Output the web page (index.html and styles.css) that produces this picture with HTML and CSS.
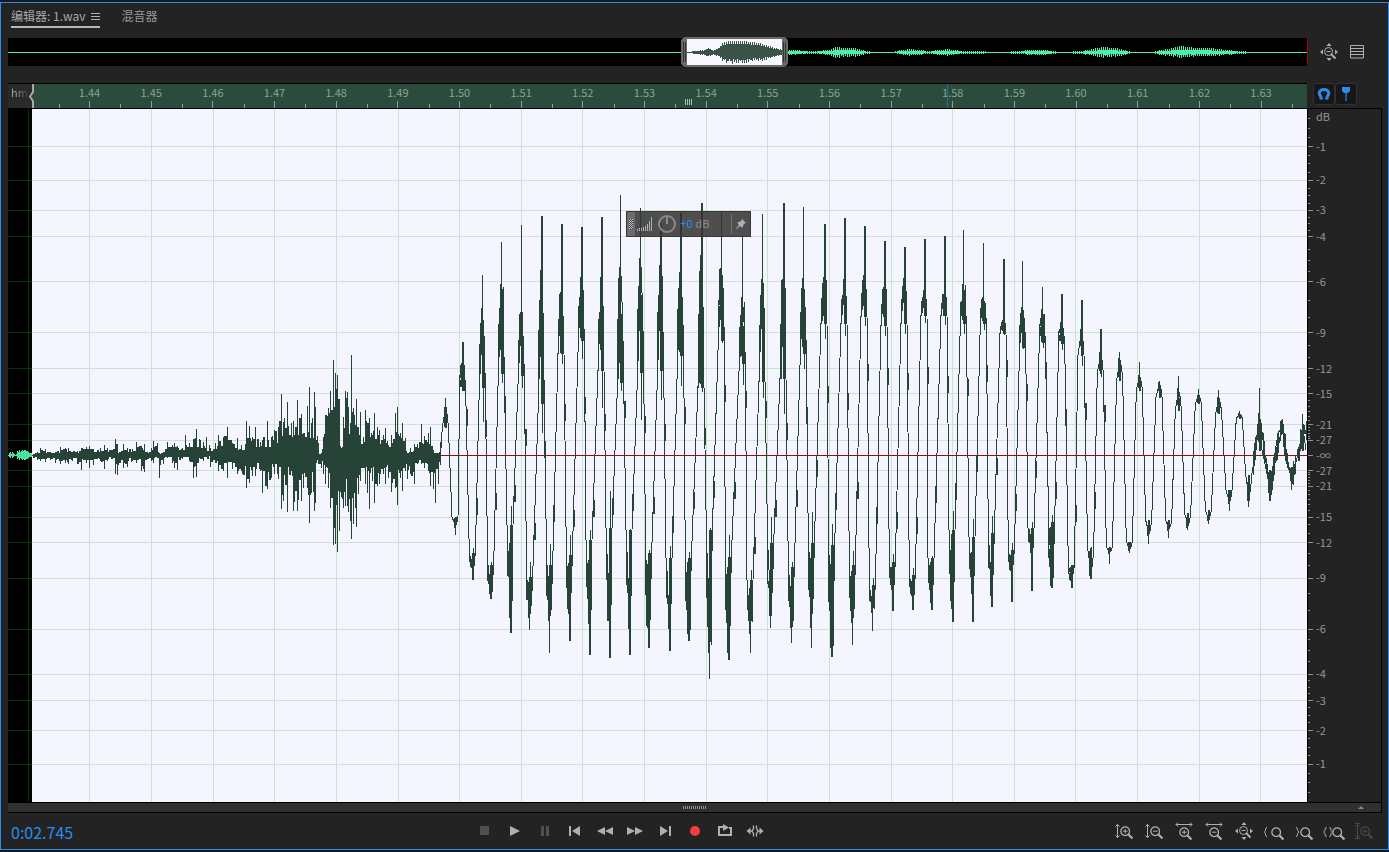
FILE: index.html
```html
<!DOCTYPE html>
<html lang="zh-CN">
<head>
<meta charset="utf-8">
<title>编辑器: 1.wav</title>
<link rel="stylesheet" href="styles.css">
</head>
<body>
<svg class="defs" aria-hidden="true">
  <symbol id="lens" viewBox="0 0 12 12"><path d="M7.800 7.800 11.500 11.500" stroke-width="2"/><circle cx="4.800" cy="4.800" r="4" stroke-width="1.200"/></symbol>
  <symbol id="updown" viewBox="0 0 5 16"><path d="M2.500 1v14M.5 3.500l2-2 2 2M.5 12.500l2 2 2-2"/></symbol>
  <symbol id="leftright" viewBox="0 0 18 5"><path d="M1 2.500h16M3 .5l-2 2 2 2M15 .5l2 2-2 2"/></symbol>
  <symbol id="allout" viewBox="0 0 18 18">
    <path d="M11 11l4.500 4.500" stroke-width="2"/><circle cx="8.500" cy="8.500" r="4"/><path d="M6.500 8.500h4"/>
    <path class="solid" d="M9 0l2.500 3h-5zM9 18l2.500-3h-5zM0 9l3-2.500v5zM18 9l-3-2.500v5z"/>
  </symbol>
</svg>
<main class="panel">
  <nav class="tabs">
    <div class="tab active"><a class="tab-link" href="#editor">编辑器: 1.wav</a>
      <button class="icon-button menu" aria-label="菜单"><svg width="9" height="9" viewBox="0 0 9 9"><path d="M0 1.500h9M0 4.500h9M0 7.500h9"/></svg></button></div>
    <div class="tab"><a class="tab-link" href="#mixer">混音器</a></div>
  </nav>

  <div class="editor">
    <div class="overview">
      <svg class="fill" id="overview" viewBox="0 0 1299 28" preserveAspectRatio="none" aria-hidden="true"></svg>
      <div class="range"><svg class="fill" id="range" viewBox="0 0 95 26" preserveAspectRatio="none" aria-hidden="true"></svg></div>
      <span class="overview-end"></span>
    </div>
    <div class="overview-tools">
      <button class="icon-button" aria-label="全部缩小"><svg width="18" height="18"><use href="#allout"/></svg></button>
      <button class="icon-button" aria-label="列表"><svg width="14" height="14" viewBox="0 0 14 14"><path d="M.5.500h13v12.500H.5zM0 3.500h14M0 6.500h14M0 9.500h14"/></svg></button>
    </div>

    <div class="ruler">
      <div class="ruler-start">hms</div>
      <svg class="brace" width="6" height="24" viewBox="0 0 6 24" aria-hidden="true"><path d="M5 0v8L2 12.500 5 17v7" stroke-width="2"/></svg>
      <div class="ruler-lead"></div>
      <div class="ruler-cells" id="times"></div>
      <div class="ruler-tail"></div>
      <div class="ruler-grip"></div>
      <div class="playmark"></div>
    </div>
    <div class="ruler-tools">
      <button class="toggle" aria-label="对齐"><svg width="14" height="14" viewBox="0 0 14 14"><path d="M4.500 10.500C0 6 3 2.500 7 2.500S14 6 9.500 10.500" stroke-width="3"/><path d="M2.500 11.500H6M8 11.500h3.500" stroke-width="2"/></svg></button>
      <button class="toggle" aria-label="标记"><svg width="10" height="14" viewBox="0 0 10 14"><path class="solid" d="M1 0h8v4L7 6H3L1 4z"/><path d="M5 5v9" stroke-width="2" opacity=".6"/></svg></button>
    </div>

    <section class="plot">
      <svg class="fill" id="wave" viewBox="0 0 1299 693" preserveAspectRatio="none" role="img" aria-label="1.wav"></svg>
      <div class="hud">
        <span class="hud-grip"></span>
        <svg width="16" height="15" viewBox="0 0 16 15" aria-hidden="true"><path d="M.5 15v-2M2.500 15v-3M4.500 15v-3M6.500 15v-4M8.500 15v-5M10.500 15V8M12.500 15V5M14.500 15V1"/></svg>
        <button class="icon-button knob" aria-label="增益旋钮"><svg width="20" height="20" viewBox="0 0 20 20"><circle cx="10" cy="10" r="8" stroke-width="2"/><path d="M10 3v7" stroke-width="2"/></svg></button>
        <input class="gain" id="gain" value="+0"><label class="unit" for="gain">dB</label>
        <button class="icon-button pin" aria-label="固定"><svg width="10" height="10" viewBox="0 0 10 10"><path class="solid" d="M6 0l4 4-1.500.5L7 6.500V8L6 8.500 4 7 .5 10 0 9.500 3 6 1.500 4 2 3h1.500L5.500 1.500z"/></svg></button>
      </div>
    </section>
    <aside class="scale">
      <span class="scale-unit">dB</span>
      <svg class="scale-ticks" id="ticks" viewBox="0 0 5 693" preserveAspectRatio="none" aria-hidden="true"></svg>
      <div class="scale-list" id="levels"></div>
    </aside>
    <div class="scroll"><span class="scroll-grip"></span><span class="scroll-up"></span></div>
  </div>

  <footer class="footer">
    <output class="time">0:02.745</output>
    <div class="buttons">
      <button class="icon-button dim" aria-label="停止"><svg width="18" height="18" viewBox="0 0 18 18"><path class="solid" d="M4 4h9v9H4z"/></svg></button>
      <button class="icon-button" aria-label="播放"><svg width="18" height="18" viewBox="0 0 18 18"><path class="solid" d="M4 4l10 5-10 5z"/></svg></button>
      <button class="icon-button dim" aria-label="暂停"><svg width="18" height="18" viewBox="0 0 18 18"><path class="solid" d="M5 4h3v10H5zM10 4h3v10h-3z"/></svg></button>
      <button class="icon-button" aria-label="移到开头"><svg width="18" height="18" viewBox="0 0 18 18"><path class="solid" d="M3 4h2v10H3zM14 4v10L6 9z"/></svg></button>
      <button class="icon-button" aria-label="快退"><svg width="18" height="18" viewBox="0 0 18 18"><path class="solid" d="M9 5v8L1 9zM17 5v8L9 9z"/></svg></button>
      <button class="icon-button" aria-label="快进"><svg width="18" height="18" viewBox="0 0 18 18"><path class="solid" d="M1 5v8l8-4zM9 5v8l8-4z"/></svg></button>
      <button class="icon-button" aria-label="移到结尾"><svg width="18" height="18" viewBox="0 0 18 18"><path class="solid" d="M4 4v10l8-5zM13 4h2v10h-2z"/></svg></button>
      <button class="icon-button record" aria-label="录制"><svg width="18" height="18" viewBox="0 0 18 18"><circle class="solid" cx="9" cy="9" r="5"/></svg></button>
      <button class="icon-button" aria-label="循环"><svg width="18" height="18" viewBox="0 0 18 18"><path d="M5 5H3v8h12V6h-2M5 5h3" stroke-width="2"/><path class="solid" d="M7 2l6 3.500L7 9z"/></svg></button>
      <button class="icon-button" aria-label="跳过"><svg width="18" height="18" viewBox="0 0 18 18"><path d="M7.500 3.500v3L6 9l1.500 2.500v3M10.500 3.500v3L12 9l-1.500 2.500v3M3 9h3M12 9h3" stroke-width="1.300"/><path class="solid" d="M.5 9l4-3.500v7zM17.500 9l-4-3.500v7z"/></svg></button>
    </div>
    <div class="footer-gap"></div>
    <div class="buttons">
      <button class="icon-button" aria-label="放大振幅"><svg width="18" height="18" viewBox="0 0 18 18"><use href="#updown" x="0" y="1" width="5" height="16"/><use href="#lens" x="5" y="4" width="13" height="13"/><path d="M8 9.200h4.500M10.200 7v4.500"/></svg></button>
      <button class="icon-button" aria-label="缩小振幅"><svg width="18" height="18" viewBox="0 0 18 18"><use href="#updown" x="0" y="1" width="5" height="16"/><use href="#lens" x="5" y="4" width="13" height="13"/><path d="M8 9.200h4.500"/></svg></button>
      <button class="icon-button" aria-label="放大时间"><svg width="18" height="18" viewBox="0 0 18 18"><use href="#leftright" x="0" y="0" width="18" height="5"/><use href="#lens" x="4" y="5" width="13" height="13"/><path d="M7 10.200h4.500M9.200 8v4.500"/></svg></button>
      <button class="icon-button" aria-label="缩小时间"><svg width="18" height="18" viewBox="0 0 18 18"><use href="#leftright" x="0" y="0" width="18" height="5"/><use href="#lens" x="4" y="5" width="13" height="13"/><path d="M7 10.200h4.500"/></svg></button>
      <button class="icon-button" aria-label="全部缩小"><svg width="18" height="18"><use href="#allout"/></svg></button>
      <button class="icon-button" aria-label="缩放至入点"><svg width="20" height="18" viewBox="0 0 20 18"><path d="M3 5L1.500 7v1.500L.5 10l1 1.500V13L3 15"/><use href="#lens" x="7" y="5" width="13" height="13"/></svg></button>
      <button class="icon-button" aria-label="缩放至出点"><svg width="18" height="18" viewBox="0 0 18 18"><path d="M1 5l1.500 2v1.500l1.500 1.500-1.500 1.500V13L1 15"/><use href="#lens" x="5" y="5" width="13" height="13"/></svg></button>
      <button class="icon-button" aria-label="缩放至选区"><svg width="22" height="18" viewBox="0 0 22 18"><path d="M3.500 5L2 7v1.500L.5 10 2 11.500V13l1.500 2M6.500 5L8 7v1.500L9.500 10 8 11.500V13l-1.500 2"/><use href="#lens" x="9" y="5" width="13" height="13"/></svg></button>
      <button class="icon-button faint" aria-label="重置缩放" disabled><svg width="18" height="18" viewBox="0 0 18 18"><path d="M0 1.500h5M0 16.500h5"/><use href="#updown" x="0" y="1" width="5" height="16"/><use href="#lens" x="5" y="4" width="13" height="13"/><path d="M8 9.200h4.500M10.200 7v4.500"/></svg></button>
    </div>
  </footer>
</main>
<script src="script.js"></script>
</body>
</html>
```

FILE: styles.css
```css
* { box-sizing: border-box; }
body {
  margin: 0;
  height: 100vh;
  padding: 2px 0;
  background: #181818;
  color: #969696;
  font: 11px/16px "Noto Sans CJK SC", "Noto Sans", sans-serif;
}
.defs { position: absolute; width: 0; height: 0; }
svg { display: block; fill: none; stroke: currentColor; }
.solid { fill: currentColor; stroke: none; }
.fill { width: 100%; height: 100%; }
button { margin: 0; padding: 0; border: 0; background: none; color: #b0b0b0; }
.icon-button { display: grid; place-items: center; }

.panel {
  height: 100%;
  display: flex;
  flex-direction: column;
  border: 1px solid #2d8ceb;
  background: #232323;
}
.tabs { display: flex; gap: 22px; height: 35px; padding: 5px 10px 10px; font-size: 12px; }
.tab { display: flex; gap: 5px; height: 20px; align-items: flex-start; }
.active { border-bottom: 2px solid #b8b8b8; color: #a8a8a8; }
.tab-link { color: inherit; text-decoration: none; line-height: 15px; }
.menu { height: 16px; }

.editor {
  flex: 1;
  min-height: 0;
  display: grid;
  grid-template-columns: minmax(0, 1fr) 75px;
  grid-template-rows: 45px 26px minmax(0, 1fr) 11px;
  padding: 0 6px 0 7px;
}
.overview { position: relative; height: 28px; background: #000; color: #4df0aa; }
.overview-end { position: absolute; right: -1px; top: 1px; width: 1px; height: 25px; background: #a00; }
.range {
  position: absolute;
  left: 51.800%;
  top: -1px;
  width: 107px;
  height: 30px;
  padding: 0 5px;
  border: 2px solid #696969;
  border-width: 2px 1px;
  border-radius: 5px;
  background:
    linear-gradient(#333, #333) 1px center / 1px 20px no-repeat,
    linear-gradient(#333, #333) 3px center / 1px 20px no-repeat,
    linear-gradient(#333, #333) 101px center / 1px 20px no-repeat,
    linear-gradient(#333, #333) 103px center / 1px 20px no-repeat,
    linear-gradient(90deg, #696969 5px, #f7f7ff 5px, #f7f7ff 100px, #696969 100px);
  color: #3b5347;
}
.overview-tools { display: flex; gap: 12px; height: 28px; padding-left: 13px; align-items: center; }

.ruler {
  position: relative;
  display: flex;
  border: 1px solid #000;
  border-width: 1px 0;
  background: #2b4c3d;
  color: #86a594;
}
.ruler-start {
  width: 24px;
  overflow: hidden;
  padding-left: 3px;
  line-height: 17px;
  color: transparent;
  background: linear-gradient(90deg, #a0a0a0 8px, #2a2a2a 22px) text, #2a2a2a;
}
.brace { position: absolute; left: 20px; top: 0; color: #a8a8a8; }
.ruler-lead { flex: 267 1 0; }
.ruler-cells { flex: 12326 1 0; display: flex; }
.ruler-tail { flex: 152 1 0; background: linear-gradient(#86a594, #86a594) left bottom / 1px 4px no-repeat; }
.time-cell {
  flex: 1 1 0;
  text-align: center;
  line-height: 16px;
  background: linear-gradient(#86a594, #86a594) left bottom / 1px 4px no-repeat, linear-gradient(#86a594, #86a594) center bottom / 1px 7px no-repeat;
}
.ruler-grip {
  position: absolute;
  left: 52.100%;
  bottom: 3px;
  width: 8px;
  height: 6px;
  background: repeating-linear-gradient(90deg, #a9bdb2 0 1px, transparent 1px 2px);
}
.playmark { position: absolute; left: 72.300%; top: 0; bottom: 0; width: 1px; background: #2d6f96; }
.ruler-tools { display: flex; padding: 0 0 3px 6px; border-bottom: 1px solid #000; }
.toggle {
  width: 22px;
  height: 22px;
  display: grid;
  place-items: center;
  border: 1px solid #303030;
  border-radius: 3px;
  background: #171717;
  color: #2d8ceb;
}

.plot { position: relative; background: #000; min-height: 0; }
.hud {
  position: absolute;
  left: 47.600%;
  top: 14.700%;
  width: 125px;
  height: 26px;
  display: flex;
  align-items: center;
  border: 1px solid #383838;
  background: rgba(50, 50, 50, .86);
  color: #b0b0b0;
}
.hud-grip {
  width: 8px;
  height: 24px;
  margin-right: 2px;
  border: solid #6c6c6c;
  border-width: 7px 2px;
  background: repeating-conic-gradient(#c0c0c0 0 25%, #444 0 50%) 0 0 / 2px 2px;
}
.knob { color: #8a8a8a; margin: 0 3px 0 4px; }
.gain { width: 15px; height: 14px; margin-bottom: 2px; padding: 0; border: 0; background: none; color: #2d8ceb; font: inherit; line-height: 14px; outline: 0; }
.unit { color: #8e8e8e; width: 36px; margin-bottom: 2px; }
.pin { flex: 1; height: 20px; border-left: 1px solid #737373; }

.scale { position: relative; border: solid #000; border-width: 0 1px; }
.scale-unit { position: absolute; left: 8px; top: -1px; }
.scale-ticks { position: absolute; left: 0; top: 0; width: 5px; height: 100%; color: #909090; }
.scale-list { height: 100%; display: flex; flex-direction: column; padding-left: 8px; overflow: hidden; }
.level { display: flex; align-items: flex-end; min-height: 0; height: 0; }
.level-text { margin-bottom: -7px; line-height: 16px; }

.scroll {
  grid-column: 1 / 3;
  position: relative;
  border: 1px solid #000;
  border-left: 0;
  background: #303030;
}
.scroll-grip {
  position: absolute;
  left: 49.100%;
  top: 3px;
  width: 24px;
  height: 3px;
  background: repeating-linear-gradient(90deg, transparent 0 1px, #909090 1px 2px);
}
.scroll-up { position: absolute; right: 17px; top: 3px; border: 3px solid transparent; border-top: 0; border-bottom-color: #858585; }

.footer { display: flex; align-items: center; height: 36px; padding: 0 9px 0 10px; }
.time { flex: 458 1 0; color: #2d8ceb; font-size: 16px; line-height: 24px; padding-top: 2px; }
.footer-gap { flex: 339 1 0; }
.buttons { display: flex; }
.buttons .icon-button { width: 30px; height: 30px; }
.buttons .dim { color: #505050; }
.buttons .faint { color: #484848; }
.buttons .record { color: #f43e3a; }
```

FILE: script.js
```js
const X0 = 8, Y0 = 109, ZERO = 455, FULL = 346.5;
let seed = 7;
const random = () => (seed = (seed * 16807) % 2147483647) / 2147483647;
const rect = (x, y1, y2, w = 1) =>
  `M${Math.floor(x)} ${Math.round(Math.min(y1, y2))}h${w}V${Math.round(Math.max(y1, y2)) + 1}h${-w}z`;
const level = db => FULL * 10 ** (db / 20);

/* Noise onset: position, top, bottom, in thirds of a pixel, origin (0, 320) */
const onset = `98,402,410 110,395,418 120,385,420 135,388,422 150,397,418 165,396,425 180,380,430 195,385,425 205,383,428 215,395,420 230,392,428 243,385,448 258,380,425 268,378,440 280,388,432 292,390,415 300,385,420 312,375,445 322,385,420 332,390,415 346,358,460 352,372,462 360,395,425 370,373,440 380,385,437 395,388,420 408,367,425 422,378,450 432,372,452 442,395,415 452,385,420 460,362,425 470,370,410 478,400,470 488,395,430 502,365,410 515,375,425 523,368,440 530,378,446 545,385,415 556,346,408 568,370,420 580,356,470 589,327,468 600,360,415 610,365,420 618,352,408 630,385,437 645,370,425 655,345,450 668,352,450 682,320,470 695,370,445 710,355,460 722,375,450 737,303,500 747,318,485 757,350,465 766,322,465 780,365,450 785,360,516 800,303,505 812,350,470 822,330,460 833,320,475 844,223,563 850,305,540 862,246,573 872,310,450 880,303,570 890,241,570 902,283,540 910,340,500 920,258,500 926,202,605 934,310,515 941,217,570 946,262,545 955,370,430 962,400,440 968,350,460 976,285,488 985,265,500 991,213,560 998,120,672 1004,160,670 1012,165,693 1018,238,630 1025,380,535 1030,290,560 1034,213,555 1040,217,555 1045,262,572 1050,310,600 1054,104,655 1060,265,610 1067,238,617 1075,320,520 1080,277,480 1088,350,440 1094,270,490 1100,310,515 1108,295,563 1116,345,480 1123,278,545 1130,322,495 1137,330,490 1150,345,460 1156,325,490 1165,375,470 1174,345,512 1184,280,500 1191,260,553 1200,340,470 1206,308,510 1215,355,450 1222,400,475 1230,385,460 1242,372,490 1252,372,430 1263,312,430 1272,348,440 1283,340,450 1291,322,495 1298,390,505 1306,400,545 1313,400,490 1320,365,430`
  .split(' ').map(s => s.split(',').map(Number));

/* Voiced cycles: position, tip, outer shoulder, inner shoulder */
const parse = (text, ox, oy) => text.split(' ').map(s => {
  const [x, a, b, c] = s.split(',').map(Number);
  return [ox + x / 3, oy + a / 3, oy + b / 3, oy + c / 3];
});
const cycles = [
  ...parse('46,625,650,710 98,457,520,600 157,256,355,590 214,155,283,550 274,105,365,555 334,78,240,640 393,102,305,490 454,110,262,450 513,80,262,540 572,14,232,575 632,54,205,545 692,100,225,540 752,70,245,495 813,38,196,590 874,66,233,450 937,135,320,520 75,1032,1010,980 127,1166,1130,1090 182,1223,1208,1125 240,1327,1280,1005 299,1318,1280,1160 359,1387,1290,1125 418,1350,1270,1095 477,1391,1300,1050 537,1400,1290,1015 597,1393,1315,1020 656,1370,1310,1090 717,1381,1315,1105 775,1350,1330,1105 838,1464,1385,1020 895,1406,1385,1100 960,1385,1330,1170', 430, 190),
  ...parse('36,72,267,572 99,38,267,565 160,52,265,490 222,102,260,400 282,85,267,400 342,108,255,378 402,153,290,405 462,172,265,400 522,148,300,375 582,139,312,375 640,120,282,400 700,160,320,398 759,206,392,430 818,212,350,470 877,290,358,455 62,1311,1275,1060 124,1357,1310,1130 184,1370,1310,1060 245,1397,1370,1065 307,1362,1297,1125 367,1320,1267,1185 427,1260,1197,1115 487,1258,1215,1155 543,1258,1235,1105 606,1292,1255,1020 666,1293,1210,1040 724,1248,1215,1030 784,1234,1140,1080 843,1200,1085,1015', 750, 190),
  ...parse('125,42,125,190 183,61,147,225 241,147,217,280 299,217,235,300 358,246,285,330 417,303,307,350 475,289,325,390 535,328,345,370 596,331,350,400 658,393,400,415 717,324,400,510 783,420,440,460 848,402,450,510 95,920,915,725 154,920,900,855 212,895,885,805 268,850,820,800 328,815,810,785 386,788,765,720 446,770,750,720 503,747,740,700 565,730,720,690 627,690,670,630 686,678,660,585 748,660,630,570 814,626,600,560', 1020, 280)
].sort((a, b) => a[0] - b[0]);

/* Tips that are a single pixel wide */
const hairlines = [482, 501, 521, 620, 640, 721, 742, 762, 803, 963, 983, 1022, 1042, 509, 529, 549, 709, 750, 770, 791, 811, 852, 872];

let solid = '', line = 'M440 465';
let hold = .7;
for (let x = 33; x < 441; x++) {
  const i = Math.max(0, onset.findIndex(p => p[0] >= x * 3) - 1);
  const [a, b] = [onset[i], onset[i + 1]];
  const t = Math.min(1, Math.max(0, (x * 3 - a[0]) / (b[0] - a[0])));
  const peak = [a, b].find(p => Math.abs(p[0] - x * 3) <= 1.5);
  if (x % 2) hold = random();
  if (peak) {
    solid += rect(x, 320 + peak[1] / 3, 320 + peak[2] / 3);
    continue;
  }
  const up = (406 - Math.max(a[1], b[1])) / 3 + Math.abs(b[1] - a[1]) / 3 * hold * .3;
  const down = (Math.min(a[2], b[2]) - 406) / 3 + Math.abs(b[2] - a[2]) / 3 * (1 - hold) * .3;
  solid += rect(x, ZERO - up * (.45 + .5 * hold), ZERO + down * (.95 - .55 * hold));
}
cycles.forEach(([x, tip, outer, inner], i) => {
  const late = x > 1075;
  const tall = Math.abs(tip - ZERO) > 110;
  const mid = outer + (inner - outer) * .45;
  const thin = !tall || hairlines.includes(Math.floor(x));
  const between = (p, q) => p + (q - p) * random();
  solid += rect(x, tip, inner, thin ? 1 : 2);
  solid += rect(x - 1, outer, between(mid, inner));
  solid += rect(x + 1, between(outer, mid), tall ? between(inner, inner + (inner - mid) * .8) : inner);
  if (tall && !late) {
    solid += rect(x - 2, between(outer, mid), between(mid, inner));
    solid += rect(x + 2, between(outer, mid), inner);
    solid += rect(x - 3, mid, inner);
  }
  line += `L${x - 3} ${inner}L${x - 1} ${mid}L${x} ${outer}L${x + 2} ${mid}L${x + 3} ${inner}`;
  const next = cycles[i + 1];
  if (next && tall) {
    const t = .15 + .2 * random();
    const y = inner + (next[3] - inner) * t;
    solid += rect(x + 3 + (next[0] - x - 6) * t, y - 8, y + 8, 2);
  }
});
for (let x = 1253; x < 1307; x++) {
  const i = cycles.findIndex(c => c[0] > x);
  const a = cycles[i < 1 ? cycles.length - 1 : i - 1], b = cycles[i < 1 ? cycles.length - 1 : i];
  const t = a === b ? 0 : (x - a[0]) / (b[0] - a[0]);
  const y = a[2] + (b[2] - a[2]) * t;
  solid += rect(x, y - 14 * random(), y + 14 * random());
}
let lead = '';
[0, 2, 3, 1, 3, 2, 1, 0, 1, 4, 3, 5, 3, 4, 5, 4, 5, 5, 4, 4, 3, 2, 2, 2].forEach((v, i) => lead += rect(X0 + i, ZERO - v, ZERO + Math.max(0, v - 1)));

const marks = [-1, -2, -3, -4, -6, -9, -12, -15, -21, -27];
const rows = [...marks.map(d => ZERO - level(d)), ...marks.map(d => ZERO + level(d))].map(Math.round);
let grid = rows.map(y => `M8 ${y}.5H1307`).join('');
for (let k = -1; k < 20; k++) grid += `M${Math.round(89.4 + 61.63 * k)}.5 109V802`;
document.getElementById('wave').innerHTML = `
  <defs><clipPath id="left"><path d="M8 109h24v693H8z"/></clipPath><clipPath id="right"><path d="M32 109h1275v693H32z"/></clipPath></defs>
  <g transform="translate(${-X0} ${-Y0})" shape-rendering="crispEdges">
    <path d="M32 109h1275v693H32z" fill="#f5f5ff" stroke="none"/>
    <path d="${grid}" stroke="#003a00" clip-path="url(#left)"/>
    <path d="${grid}" stroke="#cde3cd" clip-path="url(#right)"/>
    <path d="M8 455.500H1307" stroke="#990c10"/>
    <path d="${lead}" fill="#4be3a2" stroke="none"/>
    <path d="${solid}" fill="#274337" stroke="none"/>
    <path d="${line}" stroke="#274337" clip-path="url(#right)"/>
  </g>`;

/* Overview: position and half height in pixels */
const envelope = (points, from, to, mid, regular) => {
  let d = '';
  for (let x = from, i = 0; x < to; x++) {
    while (i < points.length - 2 && points[i + 1][0] < x) i++;
    const [a, b] = [points[i], points[i + 1]];
    const h = a[1] + (b[1] - a[1]) * Math.min(1, Math.max(0, (x - a[0]) / (b[0] - a[0])));
    const f = x % 2 ? 1 : regular;
    d += rect(x, mid - h * f, mid + h * f * (.7 + .3 * random()));
  }
  return `<path d="${d}" fill="currentColor" stroke="none" shape-rendering="crispEdges"/>`;
};
document.getElementById('overview').innerHTML = envelope(
  [[0, 0], [778, 0], [780, 2], [806, 1], [820, 2], [827, 5], [837, 4], [847, 4], [857, 1], [867, 0], [885, 0], [892, 2], [902, 3], [912, 2], [919, 1], [932, 2], [939, 3], [945, 2], [955, 1], [965, 1], [992, 0], [1010, 1], [1022, 2], [1037, 2], [1052, 0], [1074, 1], [1084, 3], [1095, 5], [1107, 4], [1117, 2], [1125, 0], [1144, 0], [1152, 2], [1164, 4], [1173, 6], [1187, 4], [1202, 4], [1217, 2], [1232, 1], [1245, 0], [1299, 0]], 0, 1299, 14, .4);
document.getElementById('range').innerHTML = envelope(
  [[0, 0], [8, 1], [16, 2], [21, 4], [26, 2], [31, 4], [35, 9], [42, 11], [56, 11], [63, 10], [72, 9], [82, 6], [88, 4], [95, 2]], 0, 95, 13, .75);

document.getElementById('times').innerHTML = Array.from({ length: 20 }, (_, i) =>
  `<span class="time-cell">${(1.44 + i / 100).toFixed(2)}</span>`).join('');

/* Level scale: each row grows by its distance from the previous mark */
const labels = [...marks.map(d => [-level(d), d]), [0, '-∞'], ...marks.slice().reverse().map(d => [level(d), d])];
let last = -FULL;
document.getElementById('levels').innerHTML = labels.map(([y, text]) => {
  const grow = (y - last).toFixed(1);
  last = y;
  return `<div class="level" style="flex-grow:${grow}"><span class="level-text">${text}</span></div>`;
}).join('') + `<div class="level" style="flex-grow:${(FULL - last).toFixed(1)}"></div>`;

let ticks = 'M0 346.500H5';
const steps = [[0, 4, .25], [4, 6, .5], [6, 27, 1]];
for (const [from, to, step] of steps)
  for (let d = from + step; d <= to; d += step)
    for (const s of [-1, 1])
      ticks += `M0 ${Math.round(346 + s * level(-d))}.5H${marks.includes(-d) ? 5 : 2}`;
document.getElementById('ticks').innerHTML = `<path d="${ticks}" shape-rendering="crispEdges"/>`;
```
